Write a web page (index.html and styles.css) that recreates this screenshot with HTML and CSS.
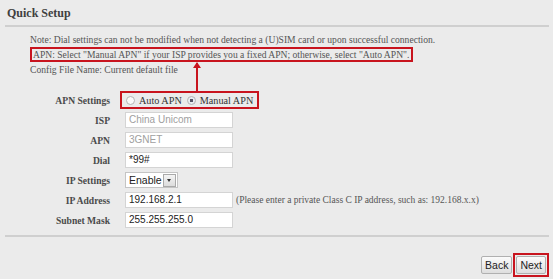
FILE: index.html
```html
<!DOCTYPE html>
<html lang="en">
<head>
  <meta charset="UTF-8" />
  <title>Quick Setup</title>
  <link rel="stylesheet" href="styles.css">
</head>
<body>

  <div class="page">
    <h1 class="title">Quick Setup</h1>

    <!-- Notes -->
    <div class="notes">
      <p>Note: Dial settings can not be modified when not detecting a (U)SIM card or upon successful connection.</p>
      <p><span class="mark">APN: Select "Manual APN" if your ISP provides you a fixed APN; otherwise, select "Auto APN".</span></p>
      <p>Config File Name: Current default file</p>
    </div>

    <!-- Callout arrow -->
    <div class="arrow"></div>

    <!-- Form -->
    <div class="form">
      <label>APN Settings</label>
      <div class="field">
        <span class="mark radios">
          <span class="radio"></span> Auto APN
          <span class="radio checked"></span> Manual APN
        </span>
      </div>

      <label>ISP</label>
      <div class="field"><span class="input off">China Unicom</span></div>

      <label>APN</label>
      <div class="field"><span class="input off">3GNET</span></div>

      <label>Dial</label>
      <div class="field"><span class="input">*99#</span></div>

      <label>IP Settings</label>
      <div class="field">
        <span class="select">Enable <span class="drop"></span></span>
      </div>

      <label>IP Address</label>
      <div class="field">
        <span class="input">192.168.2.1</span>
        <span class="hint">(Please enter a private Class C IP address, such as: 192.168.x.x)</span>
      </div>

      <label>Subnet Mask</label>
      <div class="field"><span class="input">255.255.255.0</span></div>
    </div>

    <div class="buttons">
      <span class="btn">Back</span>
      <span class="mark"><span class="btn">Next</span></span>
    </div>
  </div>

</body>
</html>
```

FILE: styles.css
```css
body {
  margin: 0;
  background: #ebebeb;
  font-family: "Liberation Serif", "Times New Roman", serif;
  color: #555;
}

.page {
  position: relative;
  padding: 0 4px 0 5px;
}

.title {
  margin: 0;
  padding: 6px 2px 0;
  height: 19px;
  font-size: 12px;
  font-weight: bold;
  color: #3f3f3f;
  border-bottom: 2px solid #cfcfcf;
}

.notes {
  padding: 5px 0 0 25px;
  font-size: 9.6px;
}

.notes p {
  margin: 0;
  line-height: 15px;
  white-space: nowrap;
}

.mark {
  border: 2px solid #c8141e;
  padding: 0 1px;
}

.notes .mark {
  padding: 0 2px 0 1px;
}

/* Red callout arrow */
.arrow {
  position: absolute;
  left: 196px;
  top: 63px;
  width: 2px;
  height: 29px;
  background: #c8141e;
}

.arrow::before {
  content: "";
  position: absolute;
  left: -3px;
  top: -1px;
  border-left: 4px solid transparent;
  border-right: 4px solid transparent;
  border-bottom: 6px solid #c8141e;
}

.form {
  display: grid;
  grid-template-columns: 105px 1fr;
  column-gap: 15px;
  row-gap: 4px;
  align-items: center;
  margin-top: 15px;
  padding-bottom: 7px;
  border-bottom: 2px solid #cfcfcf;
}

.form label {
  text-align: right;
  font-weight: bold;
  font-size: 9.6px;
  color: #4a4a4a;
}

.field {
  display: flex;
  align-items: center;
  gap: 3px;
  height: 16px;
}

.radios {
  display: flex;
  align-items: center;
  gap: 3px;
  height: 14px;
  margin-left: -5px;
  padding: 0 4px 0 4px;
  font-size: 10.2px;
  color: #333;
}

.radio {
  width: 7px;
  height: 7px;
  border: 1px solid #b5b5b5;
  border-radius: 50%;
  background: #fafafa;
  margin-right: 1px;
}

.radio.checked {
  margin-left: 2px;
  background: radial-gradient(circle, #556 0 1.6px, #e8ecf2 2px);
}

.input {
  box-sizing: border-box;
  width: 108px;
  height: 16px;
  padding: 0 3px;
  background: #fff;
  border: 1px solid #d4d4d4;
  font-family: "Liberation Sans", Arial, sans-serif;
  font-size: 10px;
  line-height: 14px;
  color: #222;
}

.input.off {
  color: #a0a0a0;
}

.select {
  display: flex;
  align-items: center;
  justify-content: space-between;
  box-sizing: border-box;
  width: 53px;
  height: 16px;
  padding: 0 1px 0 3px;
  background: #fff;
  border: 1px solid #c4c4c4;
  font-family: "Liberation Sans", Arial, sans-serif;
  font-size: 10.5px;
  color: #222;
}

.drop {
  position: relative;
  width: 11px;
  height: 11px;
  border: 1px solid #a9a9a9;
  background: linear-gradient(#f4f4f4, #dcdcdc);
}

.drop::after {
  content: "";
  position: absolute;
  left: 3px;
  top: 4px;
  border-left: 2.5px solid transparent;
  border-right: 2.5px solid transparent;
  border-top: 3px solid #333;
}

.hint {
  font-size: 9.5px;
  color: #555;
  white-space: nowrap;
}

.buttons {
  display: flex;
  justify-content: flex-end;
  align-items: center;
  gap: 1px;
  padding: 16px 0 0;
}

.buttons .mark {
  display: flex;
  padding: 1px;
}

.btn {
  display: inline-block;
  padding: 2px 3px;
  height: 12px;
  line-height: 12px;
  border: 1px solid #b0b0b0;
  border-radius: 2px;
  background: linear-gradient(#fbfbfb, #dedede);
  font-family: "Liberation Sans", Arial, sans-serif;
  font-size: 10.5px;
  color: #222;
}
```
